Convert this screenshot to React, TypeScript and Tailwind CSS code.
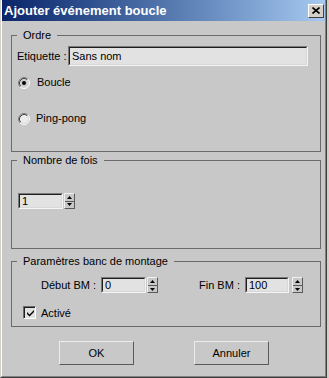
import type { ReactNode } from "react";

const Sunken = ({ className, children }: { className: string; children?: ReactNode }) => (
  <div className={`border-t border-l border-t-[#7a7a7a] border-l-[#7a7a7a] border-b border-r border-b-[#f4f4f4] border-r-[#f4f4f4] ${className}`}>
    <div className="w-full h-full border-t border-l border-t-[#1e1e1e] border-l-[#1e1e1e] border-b border-r border-b-[#d8d8d8] border-r-[#d8d8d8] bg-[#e2e2e2] flex items-center pl-[2px] leading-none">
      {children}
    </div>
  </div>
);

const Spin = () => (
  <div className="w-[11px] h-[16px] flex flex-col bg-[#c8c8c8] border-t border-l border-t-[#f0f0f0] border-l-[#f0f0f0] border-b border-r border-b-[#5a5a5a] border-r-[#5a5a5a]">
    <div className="flex-1 flex items-center justify-center border-b border-b-[#5a5a5a]">
      <svg width="5" height="3" viewBox="0 0 5 3">
        <path d="M2.5 0 L5 3 L0 3 Z" fill="#000" />
      </svg>
    </div>
    <div className="flex-1 flex items-center justify-center">
      <svg width="5" height="3" viewBox="0 0 5 3">
        <path d="M0 0 L5 0 L2.5 3 Z" fill="#000" />
      </svg>
    </div>
  </div>
);

const Radio = ({ checked }: { checked?: boolean }) => (
  <svg width="12" height="12" viewBox="0 0 12 12">
    <circle cx="6" cy="6" r="4.5" fill={checked ? "#cfcfcf" : "#ececec"} />
    <path d="M2.11 9.89 A5.5 5.5 0 0 1 9.89 2.11" fill="none" stroke="#808080" />
    <path d="M9.89 2.11 A5.5 5.5 0 0 1 2.11 9.89" fill="none" stroke="#ffffff" />
    <path d="M2.82 9.18 A4.5 4.5 0 0 1 9.18 2.82" fill="none" stroke="#404040" />
    <path d="M9.18 2.82 A4.5 4.5 0 0 1 2.82 9.18" fill="none" stroke="#dcdcdc" />
    {checked && <circle cx="6" cy="6" r="2" fill="#000" />}
  </svg>
);

const Group = ({ title, className, children }: { title: string; className: string; children?: ReactNode }) => (
  <div className={`relative border border-[#6b6b6b] ${className}`}>
    <span className="absolute -top-[8px] left-[5px] px-[6px] bg-[#c8c8c8] leading-[14px]">{title}</span>
    {children}
  </div>
);

const Button = ({ label }: { label: string }) => (
  <div className="w-[75px] h-[24px] flex items-center justify-center bg-[#c8c8c8] border-t border-l border-t-[#ececec] border-l-[#ececec] border-b border-r border-b-[#5a5a5a] border-r-[#5a5a5a]">
    {label}
  </div>
);

export default function App() {
  return (
    <div className="w-[329px] h-[378px] bg-[#d4d0c8] pr-[2px]">
      <div className="h-full border-l border-l-[#d4d0c8] border-r border-r-[#404040] border-b border-b-[#404040]">
        <div className="h-full flex flex-col border-l border-l-white border-r border-r-[#808080] border-b border-b-[#808080] bg-[#c8c8c8] font-['Liberation_Sans',Arial,sans-serif] text-[11px] text-black">
          <div className="h-[21px] shrink-0 flex items-center justify-between pl-[2px] pr-[1px] bg-linear-to-r from-[#0a246a] to-[#a6caf0]">
            <span className="text-white font-bold text-[13px] leading-none">Ajouter événement boucle</span>
            <div className="w-[16px] h-[14px] flex items-center justify-center bg-[#d4d0c8] border-t border-l border-t-white border-l-white border-b border-r border-b-[#404040] border-r-[#404040]">
              <svg width="8" height="7" viewBox="0 0 8 7">
                <path d="M0.5 0.5 L7.5 6.5 M7.5 0.5 L0.5 6.5" stroke="#000" strokeWidth="1.6" />
              </svg>
            </div>
          </div>

          <div className="flex flex-col pl-[9px] pr-[4px] pt-[14px]">
            <Group title="Ordre" className="h-[117px] pt-[10px]">
              <div className="flex items-center pl-[5px]">
                <span className="w-[51px]">Etiquette :</span>
                <Sunken className="w-[240px] h-[20px]">Sans nom</Sunken>
              </div>
              <div className="flex items-center pl-[6px] mt-[10px] h-[13px]">
                <Radio checked />
                <span className="ml-[7px]">Boucle</span>
              </div>
              <div className="flex items-center pl-[6px] mt-[23px] h-[13px]">
                <Radio />
                <span className="ml-[6px]">Ping-pong</span>
              </div>
            </Group>

            <Group title="Nombre de fois" className="h-[89px] mt-[8px] pt-[32px]">
              <div className="flex items-center pl-[6px]">
                <Sunken className="w-[45px] h-[16px]">1</Sunken>
                <div className="ml-[1px]">
                  <Spin />
                </div>
              </div>
            </Group>

            <Group title="Paramètres banc de montage" className="h-[66px] mt-[12px] pt-[15px]">
              <div className="flex items-center pl-[29px]">
                <span className="w-[60px]">Début BM :</span>
                <Sunken className="w-[45px] h-[16px]">0</Sunken>
                <div className="ml-[1px]">
                  <Spin />
                </div>
                <span className="ml-[41px] w-[46px]">Fin BM :</span>
                <Sunken className="w-[44px] h-[16px]">100</Sunken>
                <div className="ml-[3px]">
                  <Spin />
                </div>
              </div>
              <div className="flex items-center pl-[11px] mt-[11px]">
                <div className="w-[13px] h-[13px] border-t border-l border-t-[#6a6a6a] border-l-[#6a6a6a] border-b border-r border-b-white border-r-white">
                  <div className="w-full h-full bg-[#e2e2e2] border-t border-l border-t-[#1e1e1e] border-l-[#1e1e1e] flex items-center justify-center">
                    <svg width="7" height="7" viewBox="0 0 7 7">
                      <path d="M0 2 L2.5 4.5 L7 0 L7 2 L2.5 6.5 L0 4 Z" fill="#000" />
                    </svg>
                  </div>
                </div>
                <span className="ml-[5px]">Activé</span>
              </div>
            </Group>

            <div className="flex mt-[14px] pl-[48px] gap-[60px]">
              <Button label="OK" />
              <Button label="Annuler" />
            </div>
          </div>
        </div>
      </div>
    </div>
  );
}
